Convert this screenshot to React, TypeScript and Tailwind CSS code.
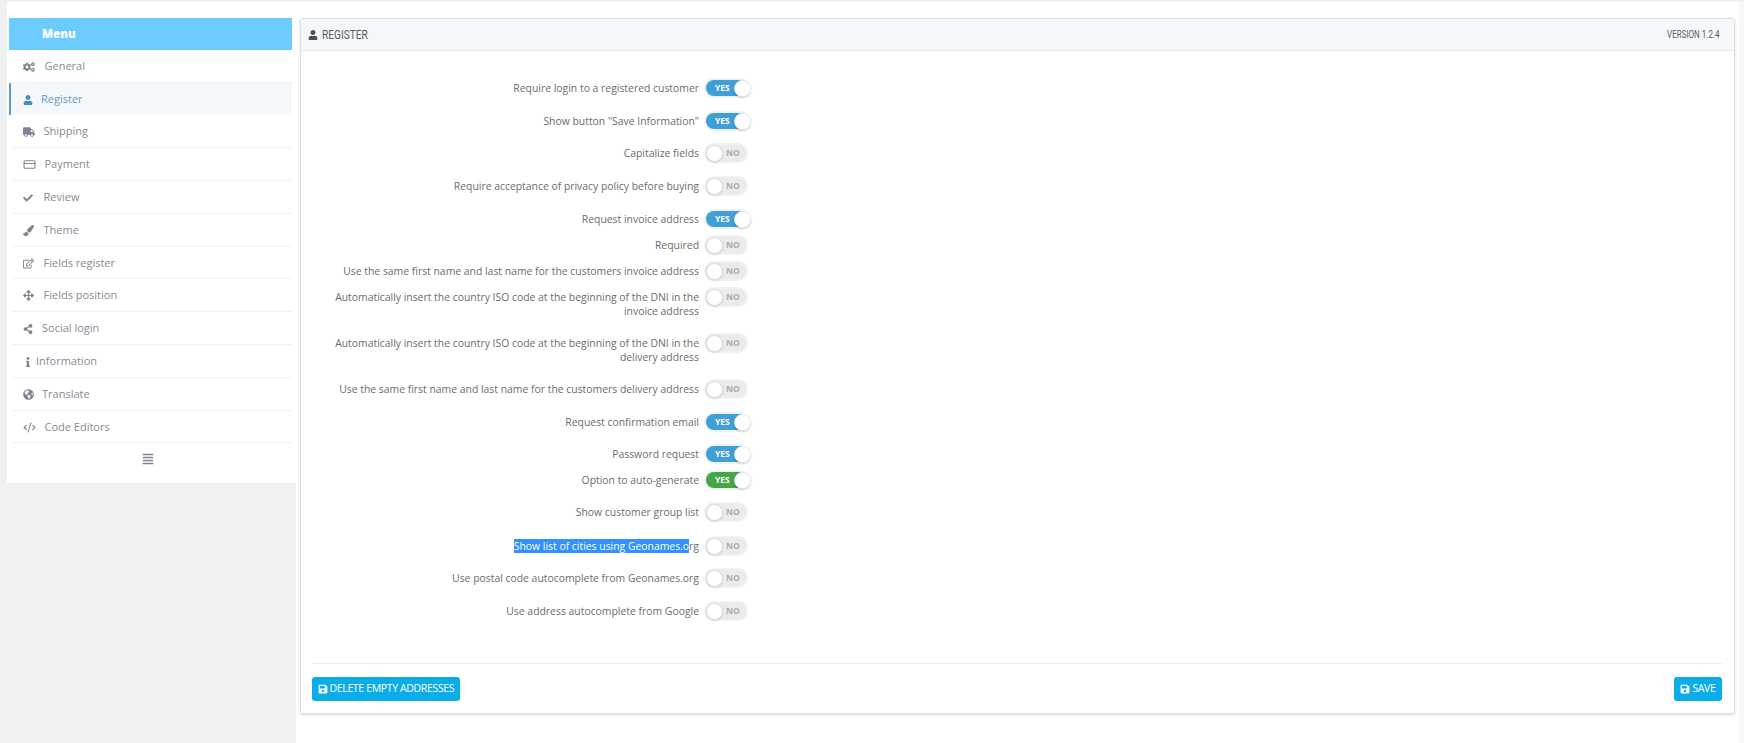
import React from "react";
import { FaCogs, FaUser, FaTruck, FaCheck, FaPaintBrush, FaRegEdit, FaArrowsAlt, FaShareAlt, FaInfo, FaGlobeAmericas, FaAlignJustify, FaSave } from "react-icons/fa";
import { CreditCard, CodeXml } from "lucide-react";

const menu = [
  { label: "General", Icon: FaCogs, w: "w-[21.5px]", size: 12, h: "h-[33px]", active: false },
  { label: "Register", Icon: FaUser, w: "w-[18px]", size: 10, h: "h-[32px]", active: true },
  { label: "Shipping", Icon: FaTruck, w: "w-[20.5px]", size: 12, h: "h-[33px]", active: false },
  { label: "Payment", Icon: CreditCard, w: "w-[21.5px]", size: 13, h: "h-[33px]", active: false },
  { label: "Review", Icon: FaCheck, w: "w-[20.5px]", size: 10, h: "h-[33px]", active: false },
  { label: "Theme", Icon: FaPaintBrush, w: "w-[20.5px]", size: 11, h: "h-[33px]", active: false },
  { label: "Fields register", Icon: FaRegEdit, w: "w-[20.5px]", size: 11, h: "h-[32px]", active: false },
  { label: "Fields position", Icon: FaArrowsAlt, w: "w-[20.5px]", size: 11, h: "h-[33px]", active: false },
  { label: "Social login", Icon: FaShareAlt, w: "w-[19px]", size: 10, h: "h-[33px]", active: false },
  { label: "Information", Icon: FaInfo, w: "w-[13px]", size: 10, h: "h-[33px]", active: false },
  { label: "Translate", Icon: FaGlobeAmericas, w: "w-[19px]", size: 11, h: "h-[33px]", active: false },
  { label: "Code Editors", Icon: CodeXml, w: "w-[21.5px]", size: 13, h: "h-[32px]", active: false },
];

type Row = { label: React.ReactNode; on?: "blue" | "green"; h: string };
const rows: Row[] = [
  { label: "Require login to a registered customer", on: "blue", h: "h-[33px]" },
  { label: 'Show button "Save Information"', on: "blue", h: "h-[32px]" },
  { label: "Capitalize fields", h: "h-[33px]" },
  { label: "Require acceptance of privacy policy before buying", h: "h-[33px]" },
  { label: "Request invoice address", on: "blue", h: "h-[26px]" },
  { label: "Required", h: "h-[26px]" },
  { label: "Use the same first name and last name for the customers invoice address", h: "h-[26px]" },
  { label: <>Automatically insert the country ISO code at the beginning of the DNI in the<br />invoice address</>, h: "h-[46px]" },
  { label: <>Automatically insert the country ISO code at the beginning of the DNI in the<br />delivery address</>, h: "h-[46px]" },
  { label: "Use the same first name and last name for the customers delivery address", h: "h-[33px]" },
  { label: "Request confirmation email", on: "blue", h: "h-[32px]" },
  { label: "Password request", on: "blue", h: "h-[26px]" },
  { label: "Option to auto-generate", on: "green", h: "h-[32px]" },
  { label: "Show customer group list", h: "h-[34px]" },
  { label: <><span className="bg-[#3390ff] text-white">Show list of cities using Geonames.o</span>rg</>, h: "h-[32px]" },
  { label: "Use postal code autocomplete from Geonames.org", h: "h-[33px]" },
  { label: "Use address autocomplete from Google", h: "h-[32px]" },
];

function Toggle({ on }: { on?: "blue" | "green" }) {
  if (on) {
    return (
      <div className={`flex h-[16px] w-[42px] items-center rounded-full pl-[9px] text-[8.5px] font-bold leading-none text-white ${on === "green" ? "bg-[#46a546]" : "bg-[#3f9fd6]"} shadow-[0_0_0_2px_#f1f1f1]`}>
        YES
        <span className="ml-auto mr-[-3px] h-[17px] w-[17px] rounded-full border border-[#eeeeee] bg-white shadow-[0_1px_2px_rgba(0,0,0,0.2)]" />
      </div>
    );
  }
  return (
    <div className="flex h-[16px] w-[40px] items-center rounded-full bg-[#e9ebed] text-[8.5px] font-bold leading-none text-[#a8adb3] shadow-[0_0_0_2px_#f1f1f1]">
      <span className="h-[17px] w-[17px] rounded-full border border-[#dcdcdc] bg-white shadow-[0_1px_2px_rgba(0,0,0,0.12)]" />
      <span className="ml-[3px]">NO</span>
    </div>
  );
}

function SaveButton({ label, className }: { label: string; className: string }) {
  return (
    <button className={`flex h-[24px] items-center gap-[2px] rounded-[3px] bg-[#0bade8] text-[10.5px] font-medium tracking-[-0.35px] text-white ${className}`}>
      <FaSave size={10} />
      {label}
    </button>
  );
}

export default function App() {
  return (
    <div className="flex h-[743px] w-[1744px] flex-col overflow-hidden bg-white font-['Open_Sans',sans-serif]">
      <div className="h-[2px] shrink-0 bg-[#f0f0f0]" />
      <div className="flex min-h-0 flex-1">
        <aside className="w-[296px] shrink-0 bg-[#eff1f3] pl-[7px]">
          <div className="h-[481px] bg-white pl-[2px] pr-[4px] pt-[16px]">
            <div className="flex h-[32px] items-center bg-[#6ccbff] pl-[33px] text-[11.5px] font-extrabold text-white">Menu</div>
            {menu.map(({ label, Icon, w, size, h, active }) => (
              <div
                key={label}
                className={`flex items-center pt-[1px] text-[11px] ${h} ${active ? "border-l-2 border-[#5b9bc9] bg-[#f5f8fb] pl-[12px] text-[#6b99bd]" : "ml-[3px] border-b border-[#f0f0f0] pl-[11px] text-[#868a94]"}`}
              >
                <span className={`flex shrink-0 items-center ${w}`}>
                  <Icon size={size} className={active ? "text-[#4a8bc2]" : "text-[#7f848f]"} />
                </span>
                {label}
              </div>
            ))}
            <div className="flex h-[32px] items-center justify-center pr-[6px]">
              <FaAlignJustify size={12} className="text-[#7f848f]" />
            </div>
          </div>
        </aside>
        <main className="min-w-0 flex-1 pl-[4px] pr-[4px] pt-[16px]">
          <section className="flex h-[696px] w-[1435px] flex-col rounded-[3px] border border-[#dcdfe3] shadow-[0_1px_3px_rgba(0,0,0,0.15)]">
            <header className="flex h-[32px] shrink-0 items-center justify-between border-b border-[#e6e9ec] bg-[#f5f8fb] pl-[7px] pr-[15px] text-[#555a60]">
              <div className="flex items-center gap-[4px]">
                <FaUser size={10} className="text-[#4a4f55]" />
                <span className="origin-left scale-x-[0.78] font-['Roboto',sans-serif] text-[13px]">REGISTER</span>
              </div>
              <span className="origin-right scale-x-[0.8] font-['Roboto',sans-serif] text-[10px]">VERSION 1.2.4</span>
            </header>
            <div className="min-h-0 flex-1 pl-[11px] pr-[12px] pt-[28px]">
              <div className="h-[584px]">
                {rows.map((r, i) => (
                  <div key={i} className={`flex items-start ${r.h}`}>
                    <div className="w-[387px] whitespace-nowrap pt-[2px] text-right text-[10.4px] leading-[14px] text-[#6c6c6c]">{r.label}</div>
                    <div className="ml-[7px] pt-[1px]"><Toggle on={r.on} /></div>
                  </div>
                ))}
              </div>
              <div className="flex h-[50px] items-start justify-between border-t border-[#eeeeee] pt-[13px]">
                <SaveButton label="DELETE EMPTY ADDRESSES" className="px-[5.5px]" />
                <SaveButton label="SAVE" className="px-[6.5px]" />
              </div>
            </div>
          </section>
        </main>
        <div className="w-[5px] shrink-0 bg-[#f7f7f7]" />
      </div>
    </div>
  );
}
